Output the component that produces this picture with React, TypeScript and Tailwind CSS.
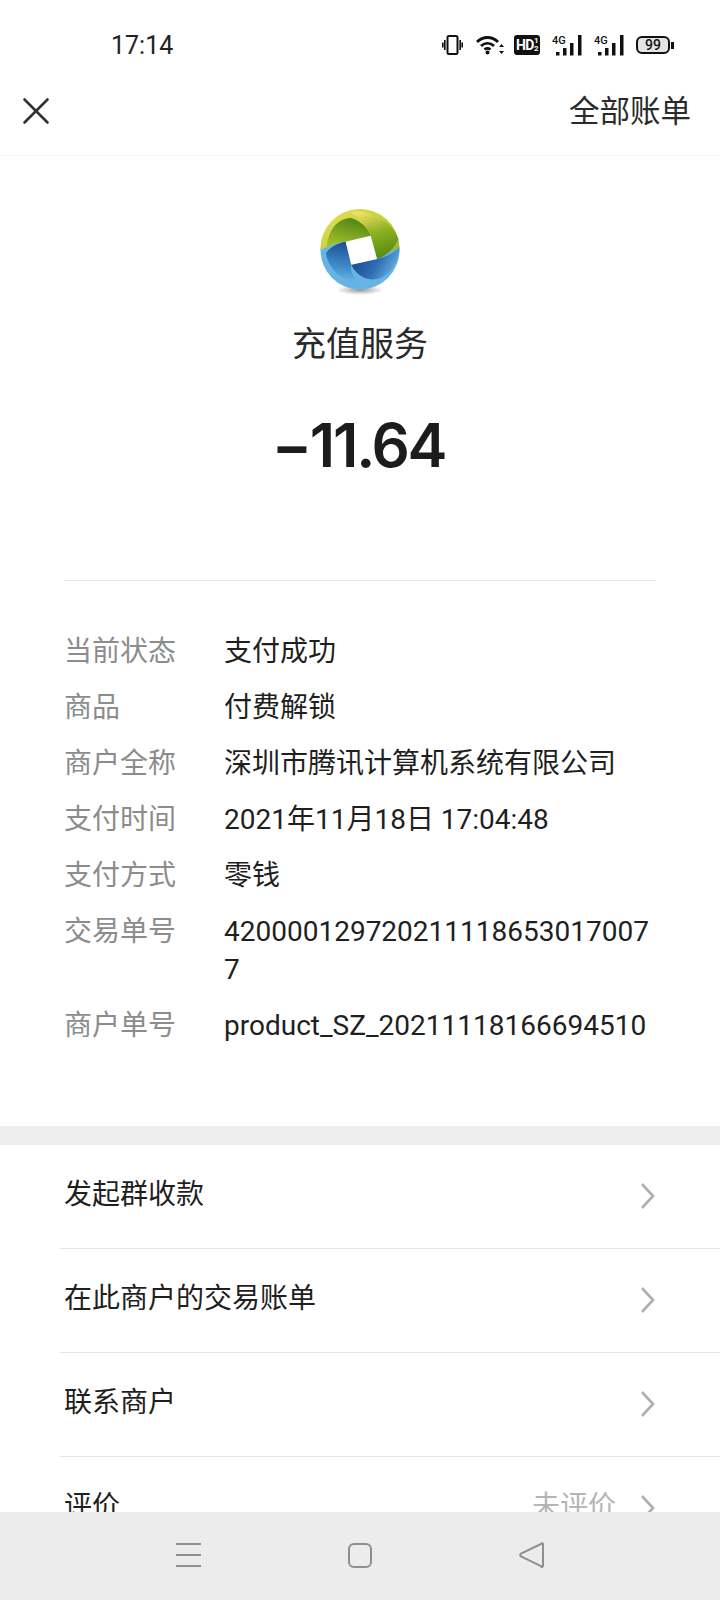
import { X } from 'lucide-react';

const font = { fontFamily: 'Roboto, "Noto Sans CJK SC", sans-serif' };

const details: [string, string[]][] = [
  ['当前状态', ['支付成功']],
  ['商品', ['付费解锁']],
  ['商户全称', ['深圳市腾讯计算机系统有限公司']],
  ['支付时间', ['2021年11月18日 17:04:48']],
  ['支付方式', ['零钱']],
  ['交易单号', ['420000129720211118653017007', '7']],
  ['商户单号', ['product_SZ_20211118166694510']],
];

const actions: { label: string; value?: string }[] = [
  { label: '发起群收款' },
  { label: '在此商户的交易账单' },
  { label: '联系商户' },
  { label: '评价', value: '未评价' },
];

function Chevron() {
  return (
    <svg width="16" height="28" viewBox="0 0 16 28" fill="none" className="mb-[2px] ml-6">
      <path d="M2 2l11 12L2 26" stroke="#b2b2b2" strokeWidth="2.8" />
    </svg>
  );
}

function StatusIcons() {
  return (
    <div className="flex items-center text-black">
      <svg width="21" height="20" viewBox="0 0 21 20" fill="none" stroke="#111" strokeWidth="1.6">
        <rect x="5.5" y="1" width="10" height="18" rx="1.5" strokeWidth="2" />
        <path d="M2.8 5v10M.8 7.5v5M18.2 5v10M20.2 7.5v5" />
      </svg>
      <svg width="28" height="20" viewBox="0 0 28 20" fill="none" stroke="#111" strokeWidth="2.8" className="ml-[13px]">
        <path d="M1 7c6-6 15-6 21 0M5 11c4-3.5 9-3.5 13 0M8.5 14.5c2-1.5 4-1.5 6 0" />
        <circle cx="11.5" cy="17.5" r="2" fill="#111" stroke="none" />
        <path d="M25.5 9l-2.5 3h5zM25.5 19l-2.5-3h5z" fill="#111" stroke="none" />
      </svg>
      <div className="ml-[10px] flex h-[20px] w-[26px] items-center justify-center rounded-[3px] bg-[#111] text-[14px] font-bold leading-none tracking-[-0.5px] text-white">
        HD<span className="text-[8px] leading-[8px]">1<br />2</span>
      </div>
      {[0, 1].map(i => (
        <svg key={i} width="30" height="21" viewBox="0 0 30 21" className="ml-[12px]">
          <text x="0" y="9" fontSize="11" fontWeight="500" fill="#111" fontFamily="Roboto, sans-serif">4G</text>
          <rect x="4" y="17" width="3.5" height="3.5" fill="#111" />
          <rect x="11" y="13" width="3.5" height="7.5" fill="#111" />
          <rect x="18" y="8" width="3.5" height="12.5" fill="#111" />
          <rect x="26" y="0" width="3.5" height="20.5" fill="#111" />
        </svg>
      ))}
      <div className="ml-[12px] flex items-center">
        <div className="flex h-[18px] w-[34px] items-center justify-center rounded-[6px] border-2 border-[#111] bg-[#e4e4e4] text-[14px] font-medium leading-none text-[#111]">
          99
        </div>
        <div className="ml-[1px] h-[7px] w-[3px] bg-[#111]" />
      </div>
    </div>
  );
}

function Logo() {
  return (
    <svg width="84" height="88" viewBox="0 0 84 88">
      <defs>
        <linearGradient id="yel" x1="0" y1="0" x2="1" y2="1">
          <stop offset="0" stopColor="#e7e05a" />
          <stop offset="0.5" stopColor="#c6d03a" />
          <stop offset="1" stopColor="#8fb324" />
        </linearGradient>
        <linearGradient id="dkg" x1="0.7" y1="0" x2="0.3" y2="1">
          <stop offset="0" stopColor="#4f8414" />
          <stop offset="1" stopColor="#a4bf2c" />
        </linearGradient>
        <linearGradient id="rg" x1="0.3" y1="0" x2="0.6" y2="1">
          <stop offset="0" stopColor="#eedf66" />
          <stop offset="0.45" stopColor="#8fb323" />
          <stop offset="1" stopColor="#55890f" />
        </linearGradient>
        <linearGradient id="lft" x1="0.6" y1="0" x2="0.5" y2="1">
          <stop offset="0" stopColor="#1e4c94" />
          <stop offset="0.6" stopColor="#3e8ccb" />
          <stop offset="1" stopColor="#72bdea" />
        </linearGradient>
        <linearGradient id="low" x1="0" y1="0.3" x2="1" y2="0.7">
          <stop offset="0" stopColor="#1b4488" />
          <stop offset="0.55" stopColor="#2f6fb4" />
          <stop offset="1" stopColor="#6fbce9" />
        </linearGradient>
        <radialGradient id="shd">
          <stop offset="0" stopColor="#666" stopOpacity="0.7" />
          <stop offset="1" stopColor="#777" stopOpacity="0" />
        </radialGradient>
      </defs>
      <ellipse cx="42" cy="81" rx="24" ry="5" fill="url(#shd)" />
      <circle cx="42" cy="41" r="39.5" fill="#66b3e6" />
      <path d="M2.5 41A39.5 39.5 0 0 1 81.5 38L59 50 52.7 26.7 27.7 32.7C18 34 10 37 2.5 41z" fill="url(#yel)" />
      <path d="M11 27C15 15 24 9 33 9 43 12 50 19 52.7 26.7L27.7 32.7C22 33 14 35 9 38 9 34 9.5 31 11 27z" fill="url(#dkg)" />
      <path d="M52.7 26.7C48 16 42 8 32 3 55 0 74 14 80.5 30 76 40 68 47 59 50z" fill="url(#rg)" />
      <path d="M27.7 32.7L33.3 55.7C32 62 35 68 41 75 24 72 10 60 8 44 12 38 20 34 27.7 32.7z" fill="url(#lft)" />
      <path d="M33.3 55.7L59 50C68 48 76 44 81.5 38 81 55 72 66 60 70 48 72 38 66 33.3 55.7z" fill="url(#low)" />
      <path d="M27.7 32.7L52.7 26.7 59 50 33.3 55.7z" fill="#fff" />
    </svg>
  );
}

export default function App() {
  return (
    <div className="relative h-[1600px] w-[720px] overflow-hidden bg-white text-[#1a1a1a]" style={font}>
      <div className="flex h-[76px] items-center justify-between pl-[111px] pr-[46px] pt-[14px]">
        <span className="text-[25px] leading-none text-[#222]">17:14</span>
        <StatusIcons />
      </div>

      <div className="flex h-[80px] items-center justify-between border-b border-[#f5f5f5] pb-[10px] pl-[13px] pr-[29px]">
        <X size={46} strokeWidth={2.6} color="#333" absoluteStrokeWidth />
        <span className="pt-[3px] text-[30.5px] leading-none text-[#2b2b2b]">全部账单</span>
      </div>

      <div className="flex flex-col items-center pt-[53px]">
        <Logo />
        <div className="mt-[23px] text-[34px] leading-[48px] text-[#2a2a2a]">充值服务</div>
        <div className="mt-[41px] pr-[3px] text-[60px] font-semibold leading-[72px] tracking-[-2.2px] text-[#1c1c1c]" style={{ fontFamily: 'Inter, sans-serif' }}>
          −11.64
        </div>
      </div>

      <div className="mx-[64px] mt-[99px] border-t border-[#e6e6e6] pt-[52px]">
        <dl className="flex flex-col">
          {details.map(([k, lines]) => (
            <div key={k} className="mb-[18px] flex text-[28px] leading-[38px]">
              <dt className="w-[160px] shrink-0 text-[#8c8c8c]">{k}</dt>
              <dd className="text-[#1f1f1f]">
                {lines.map(l => (
                  <div key={l} className="whitespace-nowrap">{l}</div>
                ))}
              </dd>
            </div>
          ))}
        </dl>
      </div>

      <div className="mt-[63px] h-[19px] bg-[#eeeeee]" />

      <div className="pl-[60px]">
        {actions.map((a, i) => (
          <div key={a.label} className={`flex h-[104px] items-center pl-[4px] pr-[64px] text-[28px] ${i < actions.length - 1 ? 'border-b border-[#e5e5e5]' : ''}`}>
            <span className="flex-1 pb-[4px] text-[#1f1f1f]">{a.label}</span>
            {a.value && <span className="pb-[4px] text-[#b5b5b5]">{a.value}</span>}
            <Chevron />
          </div>
        ))}
      </div>

      <div className="absolute bottom-0 left-0 flex h-[88px] w-full items-start bg-[#ececec] pt-[30px]">
        <svg width="720" height="26" viewBox="0 0 720 26" fill="none" stroke="#8f8f8f" strokeWidth="2">
          <path d="M176 2h25M176 13h25M176 24h25" />
          <rect x="349" y="2" width="22" height="23" rx="5" />
          <path d="M543 2.5v21a1 1 0 0 1-2 .6L521 14.5a1.8 1.8 0 0 1 0-3L541 2a1 1 0 0 1 2 .5z" />
        </svg>
      </div>
    </div>
  );
}
